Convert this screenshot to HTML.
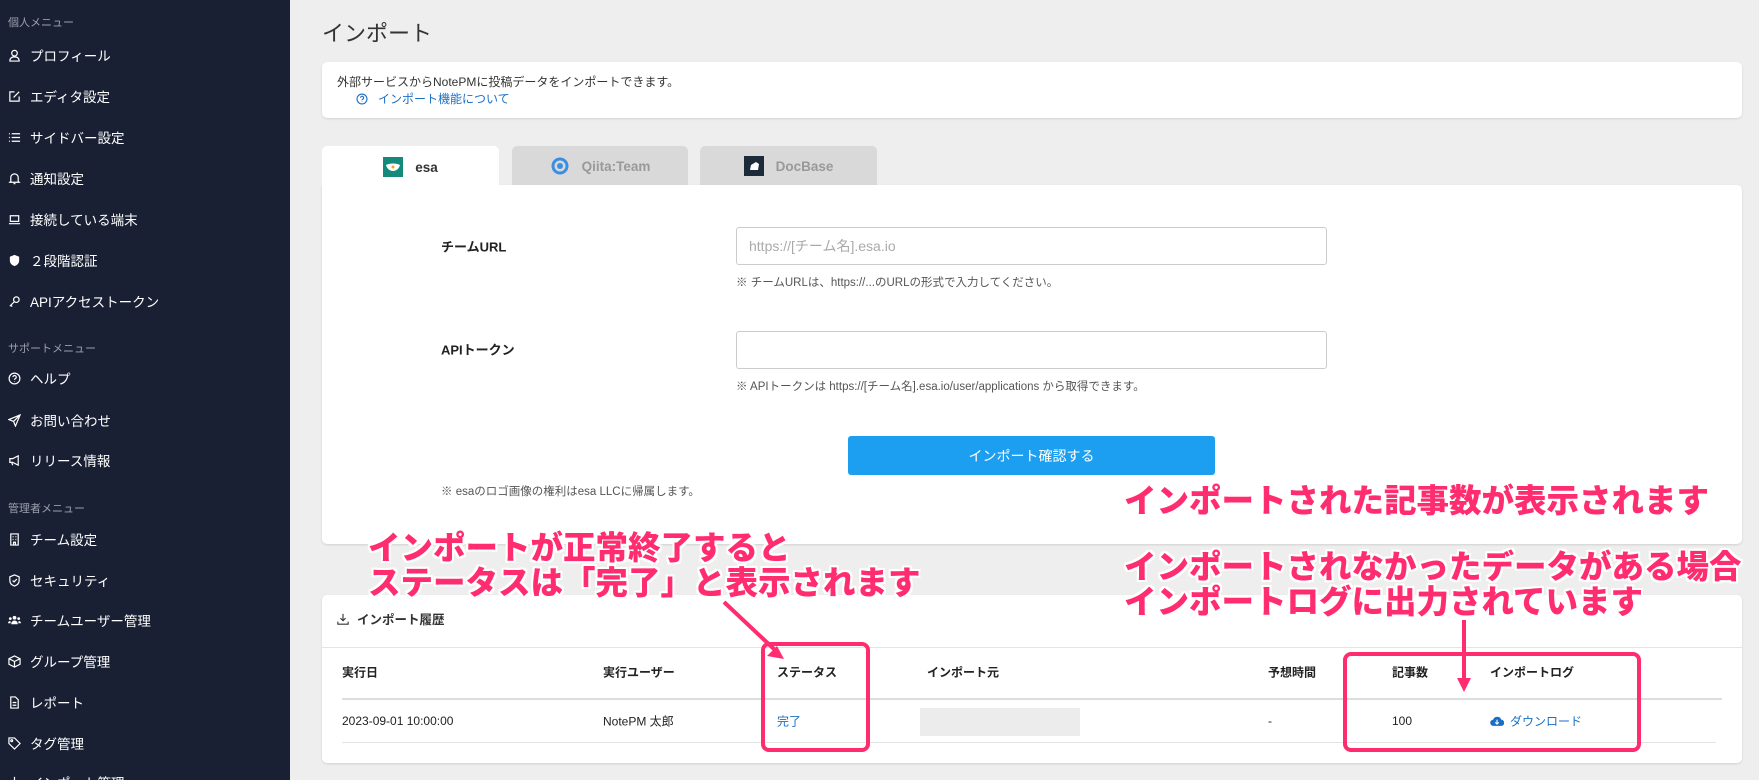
<!DOCTYPE html>
<html><head><meta charset="utf-8"><style>
*{box-sizing:border-box;margin:0;padding:0}
body{width:1759px;height:780px;overflow:hidden;background:#eeeeee;font-family:"Liberation Sans","Noto Sans CJK JP",sans-serif;color:#333;position:relative}
.side{position:absolute;left:0;top:0;width:290px;height:780px;background:#1a2033;color:#fff;overflow:hidden}
.side .h{position:absolute;left:8px;font-size:11px;color:#9aa0ad}
.side .i{position:absolute;left:8px;font-size:13.5px;color:#fff;display:flex;align-items:center;gap:9px;transform:translateY(-50%)}
.side .i svg{width:13px;height:13px;flex:none}
.abs{position:absolute}
.card{position:absolute;background:#fff;border-radius:5px;box-shadow:0 1px 2px rgba(0,0,0,.12)}
.tab{position:absolute;top:146px;height:40px;border-radius:5px 5px 0 0;display:flex;align-items:center;justify-content:center;gap:12px;font-weight:bold;font-size:13.5px}
.lbl{position:absolute;font-size:13px;font-weight:bold;color:#222;transform:translateY(-50%)}
.inp{position:absolute;left:736px;width:591px;height:38px;border:1px solid #ccc;border-radius:3px;background:#fff;font-size:14px;color:#aaa;padding:0 12px;display:flex;align-items:center}
.hint{position:absolute;left:736px;font-size:11.5px;color:#555;transform:translateY(-50%)}
.th,.td{position:absolute;font-size:12px;transform:translateY(-50%);color:#222}
.th{font-weight:bold}
.pink{position:absolute;font-family:"Noto Sans CJK JP",sans-serif;font-weight:900;font-size:32.5px;line-height:35px;color:#ff2d6f;white-space:nowrap;text-shadow:2px 0 #fff,-2px 0 #fff,0 2px #fff,0 -2px #fff,2px 2px #fff,-2px -2px #fff,2px -2px #fff,-2px 2px #fff}
.box{position:absolute;border:4px solid #ff2d6f;border-radius:8px}
</style></head><body>
<div class="side">
<div class="h" style="top:14px">個人メニュー</div>
<div class="i" style="top:55px"><svg viewBox="0 0 14 14" fill="none" stroke="#fff" stroke-width="1.3"><circle cx="7" cy="4.5" r="3"/><path d="M2 13c0-3 2-4.5 5-4.5s5 1.5 5 4.5z"/></svg>プロフィール</div>
<div class="i" style="top:96px"><svg viewBox="0 0 14 14" fill="none" stroke="#fff" stroke-width="1.3"><path d="M7 2H2v10h10V7M6 8l6-6"/></svg>エディタ設定</div>
<div class="i" style="top:137px"><svg viewBox="0 0 14 14" fill="none" stroke="#fff" stroke-width="1.3"><path d="M1 3h1M1 7h1M1 11h1M4 3h9M4 7h9M4 11h9"/></svg>サイドバー設定</div>
<div class="i" style="top:178px"><svg viewBox="0 0 14 14" fill="none" stroke="#fff" stroke-width="1.3"><path d="M3 10V6a4 4 0 018 0v4l1 1H2zM6 12.5h2"/></svg>通知設定</div>
<div class="i" style="top:219px"><svg viewBox="0 0 14 14" fill="none" stroke="#fff" stroke-width="1.3"><path d="M2.5 3h9v6h-9zM1 11.5h12"/></svg>接続している端末</div>
<div class="i" style="top:260px"><svg viewBox="0 0 14 14"><path d="M7 1l5 2v4c0 3-2 5-5 6-3-1-5-3-5-6V3z" fill="#fff"/></svg>２段階認証</div>
<div class="i" style="top:301px"><svg viewBox="0 0 14 14" fill="none" stroke="#fff" stroke-width="1.3"><circle cx="9" cy="5" r="3"/><path d="M7 7l-5 5M3 11l1.5 1.5"/></svg>APIアクセストークン</div>
<div class="h" style="top:340px">サポートメニュー</div>
<div class="i" style="top:378px"><svg viewBox="0 0 14 14" fill="none" stroke="#fff" stroke-width="1.3"><circle cx="7" cy="7" r="5.8"/><path d="M5.3 5.5a1.8 1.8 0 113 1.4c-.9.5-1.3.9-1.3 1.6M7 10v.5"/></svg>ヘルプ</div>
<div class="i" style="top:420px"><svg viewBox="0 0 14 14" fill="none" stroke="#fff" stroke-width="1.3"><path d="M13 1L1 6l5 2 2 5zM6 8l7-7"/></svg>お問い合わせ</div>
<div class="i" style="top:460px"><svg viewBox="0 0 14 14" fill="none" stroke="#fff" stroke-width="1.3"><path d="M2 5h3l6-3v10L5 9H2zM4 9l1 3"/></svg>リリース情報</div>
<div class="h" style="top:500px">管理者メニュー</div>
<div class="i" style="top:539px"><svg viewBox="0 0 14 14" fill="none" stroke="#fff" stroke-width="1.3"><path d="M3 1h8v12H3zM5 4h1M8 4h1M5 7h1M8 7h1M6 13v-3h2v3"/></svg>チーム設定</div>
<div class="i" style="top:580px"><svg viewBox="0 0 14 14" fill="none" stroke="#fff" stroke-width="1.3"><path d="M7 1l5 2v4c0 3-2 5-5 6-3-1-5-3-5-6V3zM5 7l1.5 1.5L9.5 5.5"/></svg>セキュリティ</div>
<div class="i" style="top:620px"><svg viewBox="0 0 14 14" fill="#fff"><circle cx="7" cy="4" r="2"/><circle cx="2.5" cy="5" r="1.5"/><circle cx="11.5" cy="5" r="1.5"/><path d="M3.5 11c0-2.5 1.5-4 3.5-4s3.5 1.5 3.5 4zM0 10c0-1.5 1-2.5 2.5-2.5l.5 2.5zM14 10c0-1.5-1-2.5-2.5-2.5L11 10z"/></svg>チームユーザー管理</div>
<div class="i" style="top:661px"><svg viewBox="0 0 14 14" fill="none" stroke="#fff" stroke-width="1.3"><path d="M7 1l6 3v6l-6 3-6-3V4zM1 4l6 3 6-3M7 7v6"/></svg>グループ管理</div>
<div class="i" style="top:702px"><svg viewBox="0 0 14 14" fill="none" stroke="#fff" stroke-width="1.3"><path d="M3 1h5l3 3v9H3zM5 7h4M5 10h4"/></svg>レポート</div>
<div class="i" style="top:743px"><svg viewBox="0 0 14 14" fill="none" stroke="#fff" stroke-width="1.3"><path d="M1 1h6l6 6-6 6-6-6z"/><circle cx="4" cy="4" r="1"/></svg>タグ管理</div>
<div class="i" style="top:782px"><svg viewBox="0 0 14 14" fill="none" stroke="#fff" stroke-width="1.3"><path d="M7 1v8M4 6l3 3 3-3M1 10v3h12v-3"/></svg>インポート管理</div>
</div>

<div class="abs" style="left:322px;top:16px;font-size:22px;color:#333">インポート</div>

<div class="card" style="left:322px;top:62px;width:1420px;height:56px">
<div class="abs" style="left:15px;top:11px;font-size:12px;color:#333">外部サービスからNotePMに投稿データをインポートできます。</div>
<div class="abs" style="left:34px;top:28px;font-size:12px;color:#1a6fc4;display:flex;gap:10px;align-items:center"><svg width="12" height="12" viewBox="0 0 14 14" fill="none" stroke="#1a6fc4" stroke-width="1.3"><circle cx="7" cy="7" r="5.8"/><path d="M5.3 5.5a1.8 1.8 0 113 1.4c-.9.5-1.3.9-1.3 1.6M7 10v.5"/></svg>インポート機能について</div>
</div>

<div class="tab" style="left:322px;width:177px;background:#fff;color:#333;z-index:2;height:42px"><svg width="20" height="20" viewBox="0 0 20 20"><rect width="20" height="20" fill="#138a7a"/><path d="M3 8c3-2 11-2 14 0-1 4-4 6-7 6s-6-2-7-6z" fill="#fff"/><circle cx="10" cy="10" r="1.5" fill="#f5a623"/></svg>esa</div>
<div class="tab" style="left:512px;width:176px;background:#d9d9d9;color:#999"><svg width="20" height="20" viewBox="0 0 20 20"><circle cx="10" cy="10" r="7" fill="none" stroke="#3b8fe0" stroke-width="3"/><circle cx="10" cy="10" r="3" fill="#3b8fe0"/></svg>Qiita:Team</div>
<div class="tab" style="left:700px;width:177px;background:#d9d9d9;color:#999"><svg width="20" height="20" viewBox="0 0 20 20"><rect width="20" height="20" fill="#1c2a3a"/><path d="M6 14l1-5 5-3 3 2-1 6z" fill="#fff"/></svg>DocBase</div>

<div class="card" style="left:322px;top:185px;width:1420px;height:359px;border-radius:0 5px 5px 5px"></div>
<div class="lbl" style="left:441px;top:246px">チームURL</div>
<div class="inp" style="top:227px">https://[チーム名].esa.io</div>
<div class="hint" style="top:282px">※ チームURLは、https://...のURLの形式で入力してください。</div>
<div class="lbl" style="left:441px;top:349px">APIトークン</div>
<div class="inp" style="top:331px"></div>
<div class="hint" style="top:386px">※ APIトークンは https://[チーム名].esa.io/user/applications から取得できます。</div>
<div class="abs" style="left:848px;top:436px;width:367px;height:39px;background:#1c9ff0;border-radius:3px;color:#fff;font-size:14px;display:flex;align-items:center;justify-content:center">インポート確認する</div>
<div class="hint" style="left:441px;top:491px">※ esaのロゴ画像の権利はesa LLCに帰属します。</div>

<div class="card" style="left:322px;top:595px;width:1420px;height:168px"></div>
<div class="abs" style="left:337px;top:609px;font-size:12.5px;font-weight:bold;display:flex;gap:8px;align-items:center"><svg width="12" height="12" viewBox="0 0 14 14" fill="none" stroke="#333" stroke-width="1.3"><path d="M7 1v8M4 6l3 3 3-3M1 10v3h12v-3"/></svg>インポート履歴</div>
<div class="abs" style="left:322px;top:647px;width:1420px;height:1px;background:#e4e4e4"></div>
<div class="th" style="left:342px;top:672px">実行日</div>
<div class="th" style="left:603px;top:672px">実行ユーザー</div>
<div class="th" style="left:777px;top:672px">ステータス</div>
<div class="th" style="left:927px;top:672px">インポート元</div>
<div class="th" style="left:1268px;top:672px">予想時間</div>
<div class="th" style="left:1392px;top:672px">記事数</div>
<div class="th" style="left:1490px;top:672px">インポートログ</div>
<div class="abs" style="left:342px;top:698px;width:1380px;height:2px;background:#ddd"></div>
<div class="td" style="left:342px;top:721px">2023-09-01 10:00:00</div>
<div class="td" style="left:603px;top:721px">NotePM 太郎</div>
<div class="td" style="left:777px;top:721px;color:#1a6fc4">完了</div>
<div class="abs" style="left:920px;top:708px;width:160px;height:28px;background:#ececec"></div>
<div class="td" style="left:1268px;top:721px">-</div>
<div class="td" style="left:1392px;top:721px">100</div>
<div class="td" style="left:1490px;top:721px;color:#1a6fc4;display:flex;gap:6px;align-items:center"><svg width="14" height="12" viewBox="0 0 16 12"><path d="M4 11a3.5 3.5 0 01-.5-7A5 5 0 0113 4a3.5 3.5 0 01-.5 7z" fill="#1a6fc4"/><path d="M8 4v5M6 7l2 2 2-2" stroke="#fff" stroke-width="1.3" fill="none"/></svg>ダウンロード</div>
<div class="abs" style="left:342px;top:742px;width:1374px;height:1px;background:#e4e4e4"></div>

<div class="box" style="left:761px;top:642px;width:109px;height:110px"></div>
<div class="box" style="left:1343px;top:652px;width:298px;height:100px"></div>
<svg class="abs" style="left:0;top:0" width="1759" height="780">
<path d="M724 602L775 650" stroke="#ff2d6f" stroke-width="4" fill="none"/><path d="M784 659l-17-3 10-10z" fill="#ff2d6f"/>
<path d="M1464 620V680" stroke="#ff2d6f" stroke-width="4"/><path d="M1464 692l-7-14h14z" fill="#ff2d6f"/>
</svg>
<div class="pink" style="left:368px;top:528px">インポートが正常終了すると<br>ステータスは「完了」と表示されます</div>
<div class="pink" style="left:1124px;top:481px">インポートされた記事数が表示されます</div>
<div class="pink" style="left:1124px;top:547px">インポートされなかったデータがある場合<br>インポートログに出力されています</div>
</body></html>
